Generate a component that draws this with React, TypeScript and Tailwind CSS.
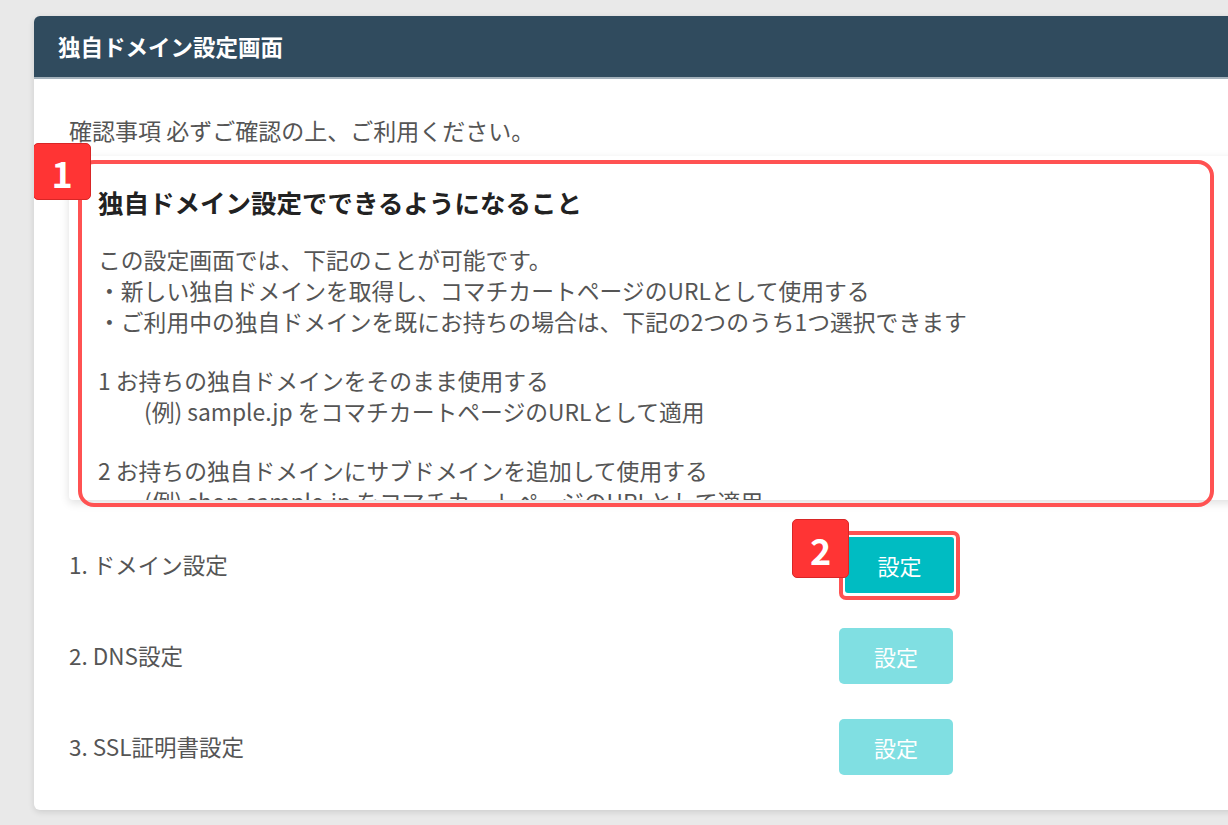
import React from "react";

const font = { fontFamily: '"Noto Sans CJK JP", "Noto Sans", sans-serif' };

function Row({ label, active, badge }: { label: string; active?: boolean; badge?: boolean }) {
  return (
    <div className="flex items-center h-[56px]">
      <div className="w-[770px] text-[22.5px] text-[#555]">{label}</div>
      <div className="relative w-[121px] h-[56px]">
        {active ? (
          <>
            <div className="absolute left-0 top-[-6px] w-[121px] h-[69px] rounded-[7px] border-[4px] border-[#ff5252]" />
            <div className="absolute left-[6px] top-0 w-[109px] h-[56px] rounded-[3px] bg-[#00bcc2] flex items-center justify-center text-white text-[22px]">
              設定
            </div>
          </>
        ) : (
          <div className="w-[114px] h-[56px] rounded-[5px] bg-[#80dfe2] flex items-center justify-center text-white text-[22px]">
            設定
          </div>
        )}
        {badge && (
          <div className="absolute left-[-47px] top-[-18px] w-[57px] h-[59px] rounded-[5px] bg-[#ff3434] border border-[#d82626] flex items-center justify-center text-white text-[36px] font-bold leading-none">
            2
          </div>
        )}
      </div>
    </div>
  );
}

export default function App() {
  return (
    <div className="w-[1228px] h-[825px] overflow-hidden bg-[#e9e9e9] pt-[16px] pl-[34px]" style={font}>
      <div className="w-[1230px] h-[794px] bg-white rounded-[6px] shadow-[0_2px_6px_rgba(0,0,0,0.12)] overflow-hidden flex flex-col">
        <div className="h-[63px] bg-[#304b5e] border-b-2 border-[#a3b1bb] flex items-center pl-[24px]">
          <span className="text-white text-[22.5px] font-bold">独自ドメイン設定画面</span>
        </div>
        <div className="pl-[35px]">
          <div className="pt-[36px] text-[23px] text-[#555] leading-[30px]">確認事項 必ずご確認の上、ご利用ください。</div>
          <div className="relative mt-[11px]">
            <div className="h-[344px] overflow-hidden bg-white shadow-[0_3px_10px_rgba(0,0,0,0.13)] rounded-l-[4px] pl-[29px] pt-[29px]">
              <div className="text-[25.5px] font-bold text-[#222] leading-[34px]">独自ドメイン設定でできるようになること</div>
              <div className="mt-[25px] text-[22.8px] text-[#555] leading-[31px]">
                <div>この設定画面では、下記のことが可能です。</div>
                <div>・新しい独自ドメインを取得し、コマチカートページのURLとして使用する</div>
                <div>・ご利用中の独自ドメインを既にお持ちの場合は、下記の2つのうち1つ選択できます</div>
                <div className="h-[28px]" />
                <div>1 お持ちの独自ドメインをそのまま使用する</div>
                <div className="pl-[46px]">(例) sample.jp をコマチカートページのURLとして適用</div>
                <div className="h-[28px]" />
                <div>2 お持ちの独自ドメインにサブドメインを追加して使用する</div>
                <div className="pl-[46px]">(例) shop.sample.jp をコマチカートページのURLとして適用</div>
              </div>
            </div>
            <div className="absolute left-[9px] top-[4px] w-[1136px] h-[347px] rounded-[16px] border-[4px] border-[#ff5252] pointer-events-none" />
            <div className="absolute left-[-36px] top-[-13px] w-[58px] h-[57px] rounded-[5px] bg-[#ff3434] border border-[#d82626] flex items-center justify-center text-white text-[36px] font-bold leading-none">
              1
            </div>
          </div>
          <div className="mt-[37px] flex flex-col gap-[35px]">
            <Row label="1. ドメイン設定" active badge />
            <Row label="2. DNS設定" />
            <Row label="3. SSL証明書設定" />
          </div>
        </div>
      </div>
    </div>
  );
}
